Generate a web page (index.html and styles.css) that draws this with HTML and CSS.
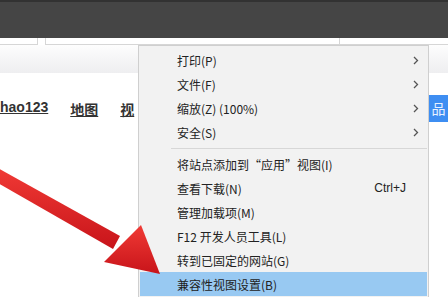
FILE: index.html
```html
<!DOCTYPE html>
<html lang="zh-CN">
<head>
  <meta charset="UTF-8">
  <title>IE 工具菜单</title>
  <link rel="stylesheet" href="styles.css">
</head>
<body>
  <div class="titlebar"></div>
  <div class="addressbar">
    <div class="box box-left"></div>
    <div class="box box-main"></div>
    <div class="box box-right"></div>
  </div>
  <div class="toolbar"></div>

  <div class="page">
    <div class="links">
      <a href="#">hao123</a>
      <a href="#">地图</a>
      <a href="#">视</a>
    </div>
    <div class="more-btn">品</div>
  </div>

  <div class="menu">
    <div class="item"><span class="label">打印(P)</span><span class="arrow"><svg width="6" height="9" viewBox="0 0 6 9"><path d="M1 1l3.5 3.5L1 8" fill="none" stroke="#555" stroke-width="1.3"/></svg></span></div>
    <div class="item"><span class="label">文件(F)</span><span class="arrow"><svg width="6" height="9" viewBox="0 0 6 9"><path d="M1 1l3.5 3.5L1 8" fill="none" stroke="#555" stroke-width="1.3"/></svg></span></div>
    <div class="item"><span class="label">缩放(Z) (100%)</span><span class="arrow"><svg width="6" height="9" viewBox="0 0 6 9"><path d="M1 1l3.5 3.5L1 8" fill="none" stroke="#555" stroke-width="1.3"/></svg></span></div>
    <div class="item"><span class="label">安全(S)</span><span class="arrow"><svg width="6" height="9" viewBox="0 0 6 9"><path d="M1 1l3.5 3.5L1 8" fill="none" stroke="#555" stroke-width="1.3"/></svg></span></div>
    <div class="sep"></div>
    <div class="item"><span class="label">将站点添加到“应用”视图(I)</span><span class="arrow"></span></div>
    <div class="item"><span class="label">查看下载(N)</span><span class="shortcut">Ctrl+J</span><span class="arrow"></span></div>
    <div class="item"><span class="label">管理加载项(M)</span><span class="arrow"></span></div>
    <div class="item"><span class="label">F12 开发人员工具(L)</span><span class="arrow"></span></div>
    <div class="item"><span class="label">转到已固定的网站(G)</span><span class="arrow"></span></div>
    <div class="item active"><span class="label">兼容性视图设置(B)</span><span class="arrow"></span></div>
  </div>

  <svg class="pointer" width="448" height="297" viewBox="0 0 448 297">
    <defs>
      <linearGradient id="red" x1="0" y1="0" x2="0" y2="1">
        <stop offset="0" stop-color="#f03a35"/>
        <stop offset="1" stop-color="#c8141a"/>
      </linearGradient>
    </defs>
    <path d="M-4 167 L120 236 L113 249 L-4 182 Z" fill="url(#red)"/>
    <path d="M104 262 L141 225 L160 274 Z" fill="url(#red)"/>
  </svg>
</body>
</html>
```

FILE: styles.css
```css
body {
  margin: 0;
  width: 448px;
  height: 297px;
  overflow: hidden;
  position: relative;
  background: #fff;
  font-family: "Microsoft YaHei", "Noto Sans CJK SC", sans-serif;
}
.titlebar {
  height: 36px;
  background: #454545;
  border-top: 2px solid #323232;
}
.addressbar {
  display: flex;
  height: 7px;
  background: #fff;
}
.box {
  border-bottom: 1px solid #d6d6d6;
}
.box-left {
  width: 37px;
  border-right: 1px solid #d6d6d6;
}
.box-main {
  width: 293px;
  margin-left: 7px;
  border-left: 1px solid #d6d6d6;
  border-right: 1px solid #d6d6d6;
}
.box-right {
  flex: 1;
}
.toolbar {
  height: 28px;
  background: linear-gradient(#fdfdfd, #eeeef0);
}
.page {
  display: flex;
  justify-content: space-between;
  align-items: flex-start;
  padding-top: 22px;
}
.links {
  display: flex;
  gap: 22px;
  padding-top: 4px;
}
.links a {
  font-family: "Liberation Sans", "Noto Sans CJK SC", sans-serif;
  font-size: 14px;
  font-weight: bold;
  color: #333;
  text-decoration: underline;
}
.more-btn {
  width: 19px;
  height: 27px;
  background: #3e8ef2;
  color: #e8f2ff;
  font-size: 14px;
  line-height: 27px;
  text-align: center;
}
.menu {
  position: absolute;
  left: 138px;
  top: 45px;
  width: 289px;
  height: 260px;
  background: #f2f2f2;
  border: 1px solid #cfcfcf;
  padding-top: 2px;
  font-size: 12px;
  color: #222;
}
.item {
  display: flex;
  align-items: center;
  height: 24px;
  padding-left: 37px;
  margin: 0 1px;
}
.item .label {
  flex: 1;
}
.item .shortcut {
  font-family: "Liberation Sans", sans-serif;
  font-size: 12px;
}
.item .arrow {
  width: 21px;
  padding-left: 7px;
  box-sizing: border-box;
  display: flex;
  align-items: center;
}
.item.active {
  background: #98c9f2;
}
.sep {
  height: 1px;
  background: #d7d7d7;
  margin: 4px 1px 3px 32px;
}
.pointer {
  position: absolute;
  left: 0;
  top: 0;
  pointer-events: none;
}
```
